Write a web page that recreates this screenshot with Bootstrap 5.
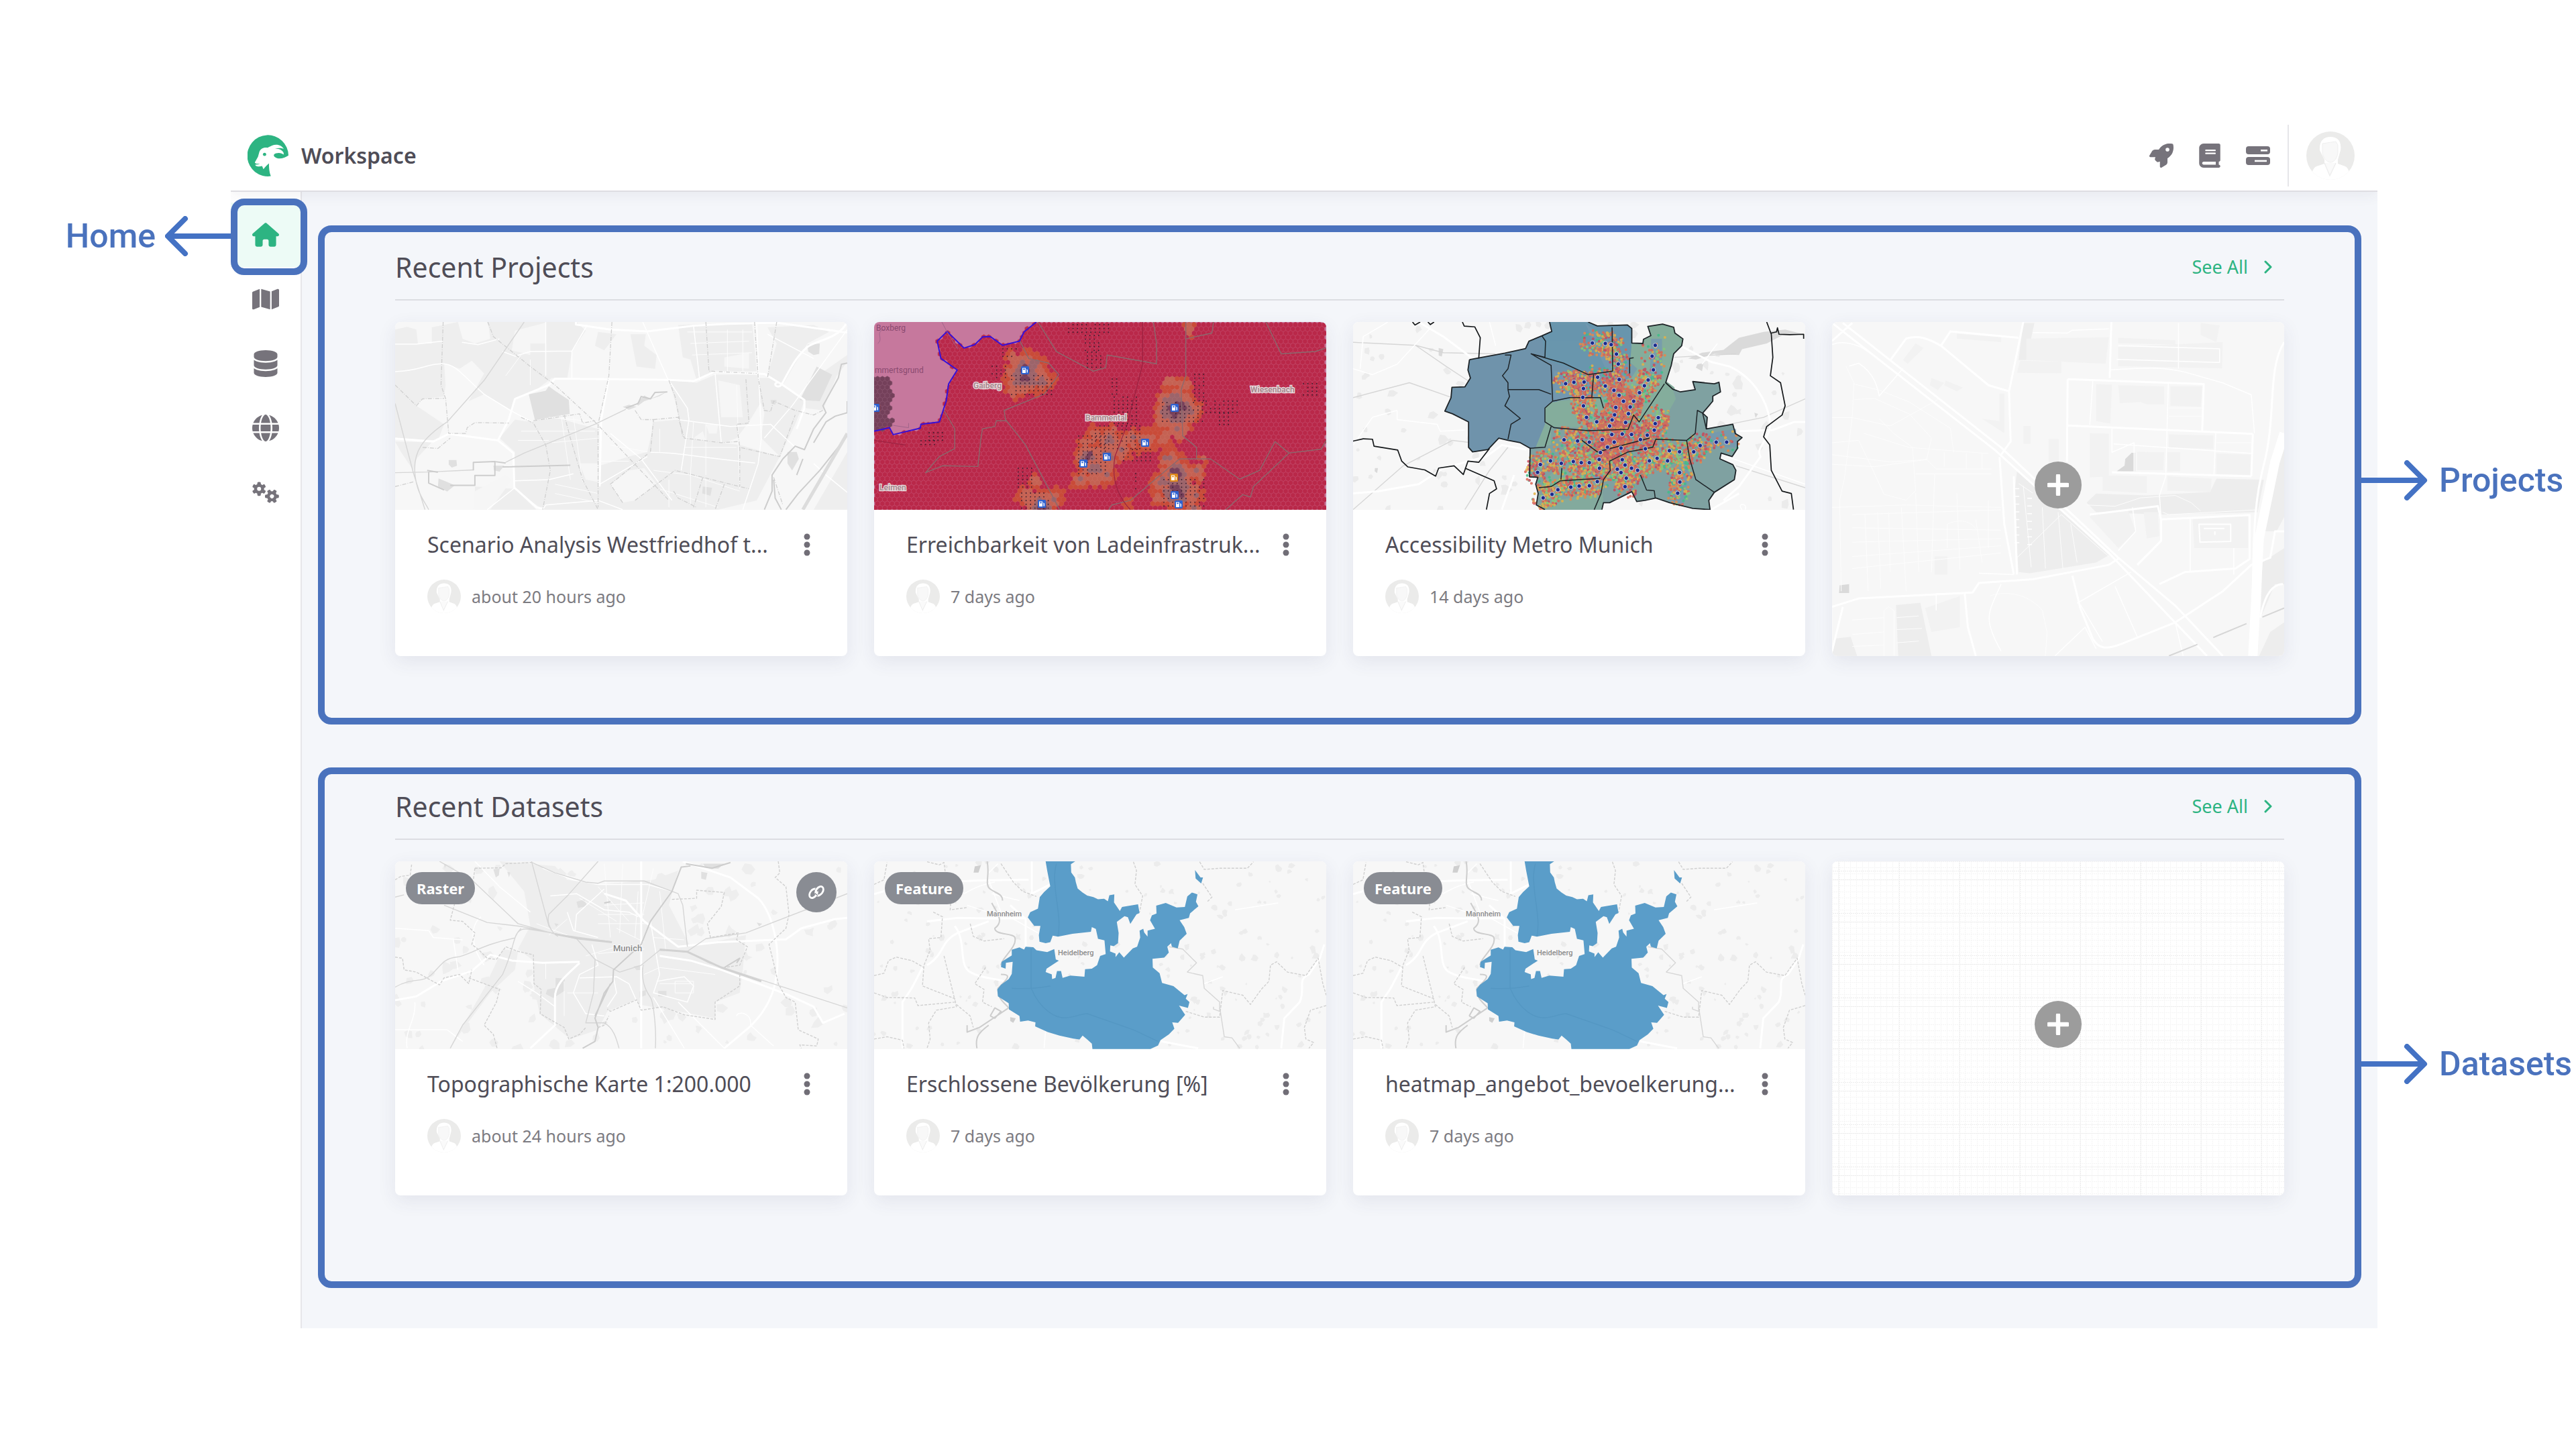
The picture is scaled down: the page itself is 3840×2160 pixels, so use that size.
<!DOCTYPE html>
<html lang="en">
<head>
<meta charset="utf-8">
<meta name="viewport" content="width=device-width, initial-scale=1">
<title>Workspace</title>
<link href="https://cdn.jsdelivr.net/npm/bootstrap@5.3.0/dist/css/bootstrap.min.css" rel="stylesheet">
<style>
  :root { --ink:#4f4d57; --icon:#76737b; --muted-ink:#7c7b81; --green:#2db482; --note:#4a72bd; --rule:#dcdde2; --canvas:#f4f6fa; }
  body { background:#fff; color:var(--ink); font-family:"Noto Sans","Open Sans",sans-serif; overflow-x:hidden; }
  a { text-decoration:none; }
  svg { display:block; }
  .stage { padding:180px 296px 180px 344px; }
  .topbar { height:106px; border-bottom:2px solid #dedde2; box-shadow:0 4px 20px rgba(58,53,85,.07); clip-path:inset(0 0 -40px 0); padding:0 34px 0 25px; position:relative; z-index:2; background:#fff; }
  .brand-name { font-size:32px; line-height:48px; font-weight:600; color:var(--ink); margin-left:19px; }
  .tool { border:0; background:none; padding:0; color:var(--icon); }
  .tools { gap:38px; }
  .divider { width:2px; height:92px; background:#e6e6e9; margin:0 26px; }
  .sidebar { width:106px; border-right:2px solid #e6e6ea; padding-top:16px; flex:none; background:#fff; }
  .side-link { height:96px; color:var(--icon); position:relative; }
  .side-link.current { background:#edfbf6; color:var(--green); }
  .ring { position:absolute; border:10px solid var(--note); border-radius:20px; z-index:3; }
  .ring-home { top:-6px; left:0; width:114px; height:114px; }
  .note { position:absolute; color:var(--note); font-family:Roboto,sans-serif; font-weight:500; font-size:50px; line-height:60px; white-space:nowrap; z-index:3; }
  .note-home { right:100%; top:20px; gap:14px; }
  .note-side { left:100%; top:370px; gap:16px; margin-left:10px; transform:translateY(-50%); }
  .content { background:var(--canvas); padding:50px 24px 60px; min-width:0; }
  .panel { border:10px solid var(--note); border-radius:20px; padding:22px 105px 92px; position:relative; }
  .panel + .panel { margin-top:64px; padding-top:18px; padding-bottom:128px; }
  .panel + .panel .note-side { top:432px; }
  .panel-head { border-bottom:2px solid var(--rule); padding-bottom:18px; margin-bottom:32px; }
  .panel-head h2 { font-size:41px; line-height:60px; margin:0; font-weight:400; color:var(--ink); }
  .see-all { color:var(--green); font-size:27px; line-height:40px; gap:24px; padding-right:18px; }
  .see-all:hover { color:var(--green); }
  .tiles { display:grid; grid-template-columns:repeat(4,minmax(0,1fr)); gap:40px; }
  .tile { border:0; border-radius:8px; overflow:hidden; box-shadow:0 8px 28px rgba(58,53,100,.09); background:#fff; }
  .tile-map { height:280px; position:relative; }
  .tile-map svg.map { width:100%; height:100%; }
  .tile-body { padding:28px 48px 64px; }
  .tile-title { font-size:32px; line-height:48px; font-weight:400; margin:0; white-space:nowrap; color:var(--ink); }
  .more { width:24px; height:48px; border:0; background:none; padding:0; color:#716e77; flex:none; }
  .tile-meta { margin-top:28px; gap:16px; font-size:25px; line-height:50px; color:var(--muted-ink); }
  .pill { position:absolute; left:16px; top:16px; height:48px; border-radius:24px; background:#898c93; color:#fff; font-weight:700; font-size:22px; line-height:48px; padding:0 16px; }
  .link-dot { position:absolute; right:16px; top:16px; width:60px; height:60px; border-radius:50%; background:#898c93; }
  .tile-new { position:relative; padding:0; min-height:498px; }
  .tile-new svg.map { position:absolute; inset:0; width:100%; height:100%; }
  .plus { width:70px; height:70px; border-radius:50%; background:#9c9c9c; position:relative; margin-bottom:12px; }
  .traced path { vector-effect:non-scaling-stroke; fill:none; stroke-linejoin:round; }
  .traced .area { stroke:none; }
  .road { stroke:#fff; stroke-width:1.5px; } .road-lg { stroke:#fff; stroke-width:3px; } .road-sm { stroke:#fdfdfd; stroke-width:1px; }
  .rail { stroke:#d6d6d6; stroke-width:1.4px; } .water { stroke:#cdcdcd; stroke-width:2px; } .bound { stroke:#d0d0d0; stroke-width:1.3px; stroke-dasharray:6 2 1 2; }
  .bound-b { stroke:#d0d0d0; stroke-width:1.4px; stroke-dasharray:4 2; }
</style>
<script src="https://cdn.jsdelivr.net/npm/bootstrap@5.3.0/dist/js/bootstrap.bundle.min.js" defer></script>
</head>
<body>

<!-- shared symbols -->
<svg width="0" height="0" class="position-absolute" aria-hidden="true">
  <defs>
    <symbol id="person" viewBox="0 0 72 72">
      <clipPath id="disc"><circle cx="36" cy="36" r="36"/></clipPath>
      <g clip-path="url(#disc)">
        <rect width="72" height="72" fill="#ebebea"/>
        <path d="M20 28C19 14 26 8 36 8s17 6 15 20l-4 14v6l11 4c6 3 7 12 7 21H7c0-9 2-18 8-21l12-4v-6z" fill="#fff"/>
        <path d="M24 18l20-3 3 5v10c0 8-5 16-11 16s-12-8-12-16z" fill="#f8f8f8" stroke="#efefef"/>
        <path d="M27 47l8 19 9-19" fill="#fafafa" stroke="#eeeeee" stroke-width="1.5"/>
      </g>
    </symbol>
    <symbol id="dots" viewBox="0 0 24 48"><circle cx="12" cy="12" r="4.5"/><circle cx="12" cy="24" r="4.5"/><circle cx="12" cy="36" r="4.5"/></symbol>
    <symbol id="chev" viewBox="0 0 12 20"><path d="M2 2l8 8-8 8" fill="none" stroke="currentColor" stroke-width="3" stroke-linecap="round" stroke-linejoin="round"/></symbol>
    <symbol id="arrow" viewBox="0 0 100 60"><path d="M0 30H92M68 4l26 26-26 26" fill="none" stroke="#4472c4" stroke-width="8" stroke-linecap="round" stroke-linejoin="round"/></symbol>
    <symbol id="cross" viewBox="0 0 30 30"><path d="M15 2v26M2 15h26" fill="none" stroke="#fff" stroke-width="6" stroke-linecap="round"/></symbol>
    <symbol id="rhein" viewBox="0 0 674 280">
      <rect width="674" height="280" fill="#f7f7f7"/>
      <g id="rheinPatches" fill="#ececec"></g>
      <g class="traced" transform="scale(.4591 .344) translate(-28 -70)">
        <path class="road-lg" d="M28 212L110 180 230 160 390 152 530 150M200 330L300 315 420 318 520 316M120 880L120 680 150 620 185 530 M200 520C260 470 240 420 300 380 L400 330M290 350C330 420 300 520 340 550S420 575 450 590M540 70V210L600 170M520 440V320L470 260M960 850L1040 870 1080 880M1350 880L1360 750 1410 680C1430 620 1400 580 1440 560L1475 490 1490 430"/>
        <path class="road" d="M400 150L440 290 560 380M400 120L430 80M320 210C360 180 380 170 420 160M420 300L330 260M410 210L500 240M1100 600L1160 570M1200 280L1340 250M580 880L585 800M870 480L860 540"/>
        <path class="bound-b" d="M28 170L60 150 70 75M200 72L240 85 255 75 262 150 280 200 275 280 330 270M220 290L250 310 245 400 205 405 210 455 190 520 185 610 290 665 295 700 230 715 205 770 210 840 200 880M28 640L70 660 160 662 170 695 290 680M28 565L60 555 75 500 100 485 150 500 190 530M255 480L290 670M440 80L480 160 510 200 555 222M340 340L350 395 385 415 450 405M390 530L355 600 385 625 380 680 410 700M870 72L880 110 875 170 900 220 890 290M1085 72L1100 105 1150 100 1240 100 1260 72M1095 165L1125 225 1110 245M1040 720L1100 745 1150 745 1160 630 1225 650 1250 690 1285 625 1310 590 1315 520 1335 505 1370 550 1430 565 1470 490 1485 600 1496 650M1496 695L1445 715 1425 790 1430 840 1455 855 1440 880M28 840L70 830 120 845 125 880M295 690L340 740 350 790"/>
        <path class="water" d="M395 70C405 130 385 170 405 190S445 210 445 240M410 250C430 300 450 330 420 360C420 390 480 380 485 400C495 440 440 490 440 520M440 560C470 560 470 570 430 620C430 670 450 680 465 705L370 790 330 810 330 780M405 740L420 705 440 720 420 750 405 740M362 880C355 830 370 810 400 780"/>
        <path class="rail" d="M985 440L1030 450 1075 510 1045 550 1095 565 1100 620 1150 680 1150 720 1130 710 1130 700M1150 700L1165 830 1190 835 1215 880"/>
        <path class="area" style="fill:#cfcfcf" d="M355 92l20-5-8 32-16 0zM470 745l18 5-8 20-10-8z"/>
        <path class="area" style="fill:#5a9dc9" d="M585 70L681 70 667 82 668 118 680 140 683 160 689 188 705 205 720 218 740 225 755 234 775 232 787 243 792 217 808 213 807 248 826 285 833 268 885 256 890 294 880 300 860 341 852 312 841 308 816 332 822 380 820 425 806 438 795 434 794 460 812 470 812 485 824 464 839 487 868 447 882 440 892 400 890 370 902 362 905 378 916 396 916 370 940 362 924 325 930 304 945 296 944 262 975 250 1010 270 1037 268 1045 222 1060 205 1078 213 1073 245 1081 265 1054 295 1050 315 1020 325 1035 355 1043 384 1020 414 1014 447 995 440 992 425 980 440 985 465 970 487 932 492 933 530 955 555 963 597 1000 611 1036 650 1046 645 1040 665 1052 680 1047 705 1018 695 1038 735 1015 770 996 768 1003 795 985 820 958 845 950 868 925 883 737 883 735 860 720 842 705 825 695 842 675 838 630 825 592 810 551 785 552 768 528 760 502 765 500 740 466 712 465 685 430 655 428 625 440 605 465 580 475 558 478 505 456 510 455 535 440 528 442 505 475 478 475 453 500 443 515 452 520 440 545 442 555 455 590 463 613 450 618 495 628 500 588 535 585 550 605 560 606 580 617 575 622 545 635 545 640 575 665 565 711 570 713 537 735 535 752 520 762 480 780 472 776 412 755 406 748 363 735 355 732 375 672 384 625 396 608 392 600 420 585 425 565 418 563 390 568 350 548 350 527 313 535 290 560 275 566 225 580 203 600 178 590 110z M1070 108l18 32h8l-6 26-18-22z"/>
        <path d="M620 80C600 170 640 300 625 395M538 450V620C570 720 620 750 650 748S700 730 720 730L870 800 950 850M475 620C520 625 560 620 600 610" stroke="#5497c3" stroke-width="1.5"/>
      </g>
      <g font-family="Roboto,sans-serif" font-size="11" font-weight="500" fill="#8b8b8b" stroke="#fafafa" stroke-width="2" paint-order="stroke"><text x="168" y="82">Mannheim</text><text x="274" y="140">Heidelberg</text></g>
    </symbol>
  </defs>
</svg>

<div class="stage">
  <header class="topbar d-flex align-items-center justify-content-between">
    <a href="#" class="d-flex align-items-center">
      <svg width="61" height="62" viewBox="708 78 149 155" preserveAspectRatio="none" aria-hidden="true"><path fill="#2db482" d="M793 232A75 77 0 1 1 857 155C845 164 828 169 815 165C801 160 800 150 812 147C822 144 834 146 839 152C843 140 828 129 808 129C825 126 836 128 840 131C834 118 815 110 797 118C790 121 785 124 781 126C765 124 755 130 751 142L746 160L735 180C733 184 742 187 752 185C748 190 738 188 736 190C737 197 750 197 761 194L766 206C773 196 780 190 786 184C786 200 787 218 793 232z"/><circle cx="770" cy="151" r="6" fill="#2db482"/></svg>
      <span class="brand-name">Workspace</span>
    </a>
    <div class="d-flex align-items-center">
      <div class="tools d-flex align-items-center">
        <button class="tool" aria-label="What's new"><svg width="36" height="36" viewBox="0 0 512 512" fill="currentColor"><path d="M156.6 384.9L125.7 354c-8.5-8.5-11.5-20.8-7.7-32.2c3-8.9 7-20.5 11.8-33.8L24 288c-8.6 0-16.6-4.6-20.9-12.1s-4.2-16.7 .2-24.1l52.5-88.5c13-21.9 36.5-35.3 61.9-35.3l82.3 0c2.4-4 4.8-7.7 7.2-11.3C289.1-4.1 411.1-8.1 483.9 5.3c11.6 2.1 20.6 11.2 22.8 22.8c13.4 72.9 9.3 194.8-111.4 276.7c-3.5 2.4-7.3 4.8-11.3 7.2v82.3c0 25.4-13.4 49-35.3 61.9l-88.5 52.5c-7.4 4.4-16.6 4.5-24.1 .2s-12.1-12.2-12.1-20.9V380.8c-14.1 4.9-26.4 8.9-35.7 11.9c-11.2 3.6-23.4 .5-31.8-7.8zM384 168a40 40 0 1 0 0-80 40 40 0 1 0 0 80z"/></svg></button>
        <button class="tool" aria-label="Documentation"><svg width="32" height="36" viewBox="0 0 448 512" fill="currentColor"><path d="M96 0C43 0 0 43 0 96V416c0 53 43 96 96 96H384h32c17.7 0 32-14.3 32-32s-14.3-32-32-32V384c17.7 0 32-14.3 32-32V32c0-17.7-14.3-32-32-32H384 96zm0 384H352v64H96c-17.7 0-32-14.3-32-32s14.3-32 32-32zm32-240c0-8.8 7.2-16 16-16H336c8.8 0 16 7.2 16 16s-7.2 16-16 16H144c-8.8 0-16-7.2-16-16zm16 48H336c8.8 0 16 7.2 16 16s-7.2 16-16 16H144c-8.8 0-16-7.2-16-16s7.2-16 16-16z"/></svg></button>
        <button class="tool" aria-label="Jobs"><svg width="36" height="28" viewBox="0 0 36 28"><g fill="currentColor"><rect width="36" height="12" rx="4"/><rect y="16" width="36" height="12" rx="4"/></g><g fill="#fff"><rect x="22" y="5" width="10" height="2.6"/><rect x="13" y="20.6" width="18" height="2.6"/></g></svg></button>
      </div>
      <div class="divider"></div>
      <button class="tool" aria-label="Account"><svg width="72" height="72"><use href="#person"/></svg></button>
    </div>
  </header>

  <div class="d-flex">
    <nav class="sidebar d-flex flex-column" aria-label="Main">
      <a href="#" class="side-link current d-flex align-items-center justify-content-center" aria-label="Home">
        <svg width="40" height="36" viewBox="0 0 576 512" fill="currentColor"><path d="M575.8 255.5c0 18-15 32.1-32 32.1h-32l.7 160.2c0 2.7-.2 5.4-.5 8.1V472c0 22.1-17.9 40-40 40H456c-1.1 0-2.2 0-3.3-.1c-1.4 .1-2.8 .1-4.2 .1H416 392c-22.1 0-40-17.9-40-40V448 384c0-17.7-14.3-32-32-32H256c-17.7 0-32 14.3-32 32v64 24c0 22.1-17.9 40-40 40H160 128.1c-1.5 0-3-.1-4.5-.2c-1.2 .1-2.4 .2-3.6 .2H104c-22.1 0-40-17.9-40-40V360c0-.9 0-1.9 .1-2.8V287.6H32c-18 0-32-14-32-32.1c0-9 3-17 10-24L266.4 8c7-7 15-8 22-8s15 2 21 7L564.8 231.5c8 7 12 15 11 24z"/></svg>
        <span class="ring ring-home"></span>
        <span class="note note-home d-flex align-items-center">Home<svg width="98" height="60" viewBox="0 0 98 60" aria-hidden="true"><path d="M98 30H6M30 4L4 30l26 26" fill="none" stroke="#4472c4" stroke-width="8" stroke-linecap="round" stroke-linejoin="round"/></svg></span>
      </a>
      <a href="#" class="side-link d-flex align-items-center justify-content-center" aria-label="Projects"><svg width="40" height="36" viewBox="0 0 576 512" fill="currentColor"><path d="M384 476.1L192 421.2V35.9L384 90.8V476.1zm32-1.2V88.4L543.1 37.5c15.8-6.3 32.9 5.3 32.9 22.3V394.6c0 9.8-6 18.6-15.1 22.3L416 474.8zM15.1 95.1L160 37.2V423.6L32.9 474.5C17.1 480.8 0 469.2 0 452.2V117.4c0-9.8 6-18.6 15.1-22.3z"/></svg></a>
      <a href="#" class="side-link d-flex align-items-center justify-content-center" aria-label="Datasets"><svg width="36" height="40" viewBox="0 0 448 512" fill="currentColor"><path d="M448 80v48c0 44.2-100.3 80-224 80S0 172.2 0 128V80C0 35.8 100.3 0 224 0S448 35.8 448 80zM393.2 214.7c20.8-7.4 39.9-16.9 54.8-28.6V288c0 44.2-100.3 80-224 80S0 332.2 0 288V186.1c14.9 11.8 34 21.2 54.8 28.6C99.7 230.7 159.5 240 224 240s124.3-9.3 169.2-25.3zM0 346.1c14.9 11.8 34 21.2 54.8 28.6C99.7 390.7 159.5 400 224 400s124.3-9.3 169.2-25.3c20.8-7.4 39.9-16.9 54.8-28.6V432c0 44.2-100.3 80-224 80S0 476.2 0 432V346.1z"/></svg></a>
      <a href="#" class="side-link d-flex align-items-center justify-content-center" aria-label="Catalog"><svg width="40" height="40" viewBox="0 0 512 512" fill="currentColor"><path d="M352 256c0 22.2-1.2 43.6-3.3 64H163.3c-2.2-20.4-3.3-41.8-3.3-64s1.2-43.6 3.3-64H348.7c2.2 20.4 3.3 41.8 3.3 64zm28.8-64H503.9c5.3 20.5 8.1 41.9 8.1 64s-2.8 43.5-8.1 64H380.8c2.1-20.6 3.2-42 3.2-64s-1.1-43.4-3.2-64zm112.6-32H376.7c-10-63.9-29.8-117.4-55.3-151.6c78.3 20.7 142 77.5 171.9 151.6zm-149.1 0H167.7c6.1-36.4 15.5-68.6 27-94.7c10.5-23.6 22.2-40.7 33.5-51.5C239.4 3.2 248.7 0 256 0s16.6 3.2 27.8 13.8c11.3 10.8 23 27.9 33.5 51.5c11.6 26 20.9 58.2 27 94.7zm-209 0H18.6C48.6 85.9 112.2 29.1 190.6 8.4C165.1 42.6 145.3 96.1 135.3 160zM8.1 192H131.2c-2.1 20.6-3.2 42-3.2 64s1.1 43.4 3.2 64H8.1C2.8 299.5 0 278.1 0 256s2.8-43.5 8.1-64zM194.7 446.6c-11.6-26-20.9-58.2-27-94.6H344.3c-6.1 36.4-15.5 68.6-27 94.6c-10.5 23.6-22.2 40.7-33.5 51.5C272.6 508.8 263.3 512 256 512s-16.6-3.2-27.8-13.8c-11.3-10.8-23-27.9-33.5-51.5zM135.3 352c10 63.9 29.8 117.4 55.3 151.6C112.2 482.9 48.6 426.1 18.6 352H135.3zm358.1 0c-30 74.1-93.6 130.9-171.9 151.6c25.5-34.2 45.2-87.7 55.3-151.6H493.4z"/></svg></a>
      <a href="#" class="side-link d-flex align-items-center justify-content-center" aria-label="Settings"><svg width="40" height="32" viewBox="0 0 40 32"><defs><g id="cog"><circle r="5.2" fill="none" stroke="currentColor" stroke-width="4.6"/><g fill="currentColor"><rect x="-2.6" y="-10.4" width="5.2" height="20.8" rx="1.6"/><rect x="-2.6" y="-10.4" width="5.2" height="20.8" rx="1.6" transform="rotate(60)"/><rect x="-2.6" y="-10.4" width="5.2" height="20.8" rx="1.6" transform="rotate(120)"/></g><circle r="3" fill="#fff"/></g></defs><use href="#cog" transform="translate(10.2 10.8)"/><use href="#cog" transform="translate(29.4 21.8) rotate(30)"/></svg></a>
    </nav>

    <main class="content flex-grow-1">
      <section class="panel">
        <div class="panel-head d-flex align-items-center justify-content-between">
          <h2>Recent Projects</h2>
          <a href="#" class="see-all d-flex align-items-center">See All<svg width="12" height="20"><use href="#chev"/></svg></a>
        </div>
        <div class="tiles">
          <article class="tile card">
            <div class="tile-map"><svg class="map" viewBox="0 0 674 280" preserveAspectRatio="xMidYMid slice" role="img" aria-label="Map preview">
              <rect width="674" height="280" fill="#f7f7f7"/>
              <g class="traced" transform="scale(.4591 .344) translate(-41 -57)">
                <path class="area" style="fill:#eeeeee" d="M41 90L80 78 110 90 115 150 160 150 160 80 245 57 260 130 300 150 350 130 345 80 340 57 540 57 630 57 660 95 615 185 600 300 550 300 500 350 430 390 420 440 330 370 280 400 330 280 290 225 250 260 200 235 205 330 200 380 130 390 110 420 200 500 180 570 41 560zM41 575L160 578 110 650 100 700 60 620zM380 560L430 480 480 490 560 470 640 500 700 520 705 870 520 870 425 775 430 620zM700 100L760 110 720 180 690 160zM805 110L855 110 850 160 890 200 885 260 825 250zM960 70L1200 57 1215 270 1085 275 1020 310 1000 220 975 210zM930 310L1020 320 1080 285 1215 285 1240 380 1190 490 1150 560 1110 580 975 555 950 400zM880 490L960 480 985 560 1100 580 1160 590 1290 640 1215 830 1090 870 700 870 705 680 800 640 860 620 870 560zM1250 80L1400 70 1450 100 1380 150 1330 260 1300 330 1250 290 1280 150zM1380 320L1509 200 1509 230 1475 290 1430 440 1370 430zM1270 300L1370 400 1340 500 1290 640 1230 560 1240 450 1200 300zM1509 620L1400 870 1509 870zM300 770L430 780 500 870 300 870z"/>
                <path class="area" style="fill:#f6f6f6" d="M430 95L530 60 530 150 480 150 480 200 420 180zM300 790L400 720 420 740 350 870 295 870zM640 670L700 670 700 750 660 740zM740 760L800 700 850 690 890 760 820 830 780 840zM1010 560L1050 570 1040 530zM1090 310L1160 330 1170 470 1100 470zM1050 500L1090 500 1085 540 1060 540zM1110 210L1190 190 1190 260 1110 250z"/>
                <path class="area" style="fill:#e0e0e0" d="M475 370L530 355 540 335 560 355 605 395 608 455 495 482zM1380 155L1420 150 1418 195 1400 200 1382 185zM1410 250L1460 285 1420 400 1355 395zM1040 770L1070 775 1065 810 1038 800zM182 735L210 750 235 765 210 792 180 770zM215 655L240 655 242 680 225 688 215 675zM780 425L800 415 825 425 800 437zM825 410L850 375 870 390 925 358 900 378 850 400 830 420zM1315 620L1345 620 1352 650 1330 700 1315 670zM1260 395L1280 395 1275 415 1262 410zM360 680L395 680 380 705 362 700z"/>
                <path class="road-lg" d="M628 57V68L740 90 860 98 1010 73 1120 65 1280 60 1509 103M41 562L165 575 215 542 375 570 425 625 428 775 500 860 520 866M375 570L410 480 430 390 540 330 560 303 740 305 930 308 1010 313 1080 272 1240 282 1300 330 1370 395 1370 430 1345 520M705 770L710 480 735 300M1505 65C1480 130 1400 140 1380 165C1340 210 1320 270 1295 330C1280 350 1265 320 1285 318"/>
                <path class="road" d="M41 272C120 270 140 240 190 238S260 290 330 370L415 440 485 490M41 153H110L195 140M258 145L310 155 380 130M390 185L430 205 480 185 615 183 665 70M530 57L530 290M615 185V300M845 57L925 300 990 430 995 480 970 700M1010 75L1030 310M1080 280L1100 580M1215 57L1230 560 1220 670 1170 870M870 622C960 622 1000 640 1210 668M840 650L940 830M740 540L840 650M430 745L540 740 620 715M1400 670L1440 720 1509 795M1240 560L1330 420 1509 90M430 775L340 870M705 760L860 640M520 870L530 850 700 830 780 870M960 480L1130 510 1260 500 1340 600M1250 110L1400 215"/>
                <path class="road-sm" d="M540 470L700 490M550 580L700 560M740 590L860 620M980 600L1150 600M1010 490L1000 720M1050 500V720M900 520V620M1150 330L1160 780M620 470L650 750M580 460L610 740M450 530L690 530M440 570L540 570M700 660H800M990 100H1200M1000 150L1190 140M1005 200L1200 190M880 700L1000 720 1160 790M900 780L1090 860M930 740V860M1000 720V850M1050 730V860M450 200L400 290M480 220V330M560 760L700 800M560 800L700 840M1120 90V270M1170 90V270"/>
                <path class="bound" d="M197 57L190 330 205 390 215 540 270 540 275 515 300 493 410 495M41 330L110 420 130 390 200 388M342 57L360 120 480 250 560 330 690 490 810 660 930 830M450 470L490 495 530 590 545 700 520 870M590 460L610 560 650 740 700 870M490 485L640 455 650 495 690 485M745 57L735 290 700 500 700 860M820 440L840 480 880 480 870 620M880 480L960 470 980 560 1100 580 1155 575M930 310L950 380 975 555M1050 57L1060 270 1215 280M1208 57L1220 300 1240 440 1260 445 1270 400 1340 440 1400 460 1430 440M1180 305L1190 495 1150 500 1160 600 1290 640 1340 460M1160 600V770M130 600L180 605 220 560M41 770L100 750M780 840L740 760 860 630M820 830L950 700 1160 770 1190 780M945 790L960 820 1020 860M1040 730L1010 860M1110 760L1080 870M1280 57L1250 300M1270 730L1300 850"/>
                <path class="rail" d="M460 57L330 310 210 490C130 560 100 620 105 710S140 840 150 870M41 410L100 710 138 870M400 665L460 625 690 500 790 435M41 710L150 707 295 698"/>
                <path class="water" d="M295 700V665L365 662V722H300V765L220 765M150 707V755L200 785M145 700L180 708M390 685L610 678M365 662L400 668M1509 235L1490 240 1480 300 1430 420 1440 450 1400 520 1370 610 1340 595 1300 650 1265 720 1265 790 1240 870M1509 400V450L1470 465 1440 490 1400 580M1509 550L1420 700 1350 800 1310 870M1345 720L1365 650M1270 740L1275 820 1295 870M790 430L830 410 840 380 870 390 885 362 925 360"/>
                <path d="M1509 540L1365 870" stroke="#dcdcdc" stroke-width="5"/>
              </g></svg></div>
            <div class="tile-body">
              <div class="d-flex justify-content-between"><h3 class="tile-title">Scenario Analysis Westfriedhof t...</h3><button class="more" aria-label="More"><svg width="24" height="48" fill="currentColor"><use href="#dots"/></svg></button></div>
              <div class="tile-meta d-flex align-items-center"><svg width="50" height="50"><use href="#person"/></svg><span>about 20 hours ago</span></div>
            </div>
          </article>

          <article class="tile card">
            <div class="tile-map"><svg class="map" viewBox="0 0 674 280" preserveAspectRatio="xMidYMid slice" role="img" aria-label="Map preview">
              <rect width="674" height="280" fill="#c6789d"/>
              <g id="hexes" stroke-width=".7"></g>
              <g class="traced" transform="scale(.4591 .344) translate(-28 -57)">
                <path d="M560 57L620 185 740 270 780 255 785 200 945 238 945 150 935 57M1040 57V290L1025 350 1030 550 1075 600V650H1020L860 830 800 850 790 870M1040 130L1125 105 1130 57M1300 57L1350 195 1460 185 1496 170M1075 650H1120L1215 738 1280 700 1330 575 1375 625 1480 608 1496 570M1375 625L1260 770 1250 815 1225 805 1170 870M500 135L530 215 595 235 628 285 580 370 450 440 455 480 520 590 630 870M255 440L290 520 290 605 240 640 195 710 250 680 365 683 375 560 380 520 420 510 425 485 458 485" stroke="#8a6a6e" stroke-width="1.4"/>
                <path d="M900 57V240L850 500 810 640C800 720 810 800 860 870M28 570L130 590" stroke="#9b2140" stroke-width="1.2"/>
                <path d="M555 57L515 100 500 140 445 158 405 120 380 122 355 155 320 170 265 98 233 140 245 215 298 265 270 325 262 400 240 490 180 500 178 517 90 545 78 515 28 530" stroke="#3510d8" stroke-width="2"/>
                <path d="M248 57L265 100 300 175M60 90C30 100 60 130 40 150M90 505L140 515V495" stroke="#a0648a" stroke-width="1"/>
              </g>
              <g id="builds" fill="#3c1f30"></g>
              <g id="pumps"></g>
              <g font-family="Roboto,sans-serif" font-size="12" font-weight="700" fill="#a98a90" stroke="#eee0e2" stroke-width="2.4" paint-order="stroke"><text x="148" y="99">Gaiberg</text><text x="561" y="105">Wiesenbach</text><text x="315" y="147">Bammental</text><text x="8" y="251">Leimen</text></g>
              <g font-family="Roboto,sans-serif" font-size="12" fill="#8a4a70"><text x="1" y="76">mmertsgrund</text><text x="3" y="13">Boxberg</text></g>
            </svg></div>
            <div class="tile-body">
              <div class="d-flex justify-content-between"><h3 class="tile-title">Erreichbarkeit von Ladeinfrastruk...</h3><button class="more" aria-label="More"><svg width="24" height="48" fill="currentColor"><use href="#dots"/></svg></button></div>
              <div class="tile-meta d-flex align-items-center"><svg width="50" height="50"><use href="#person"/></svg><span>7 days ago</span></div>
            </div>
          </article>

          <article class="tile card">
            <div class="tile-map"><svg class="map" viewBox="0 0 674 280" preserveAspectRatio="xMidYMid slice" role="img" aria-label="Map preview">
              <rect width="674" height="280" fill="#f7f7f7"/>
              <g id="metroPatches" fill="#ebebeb"></g>
              <g class="traced" transform="scale(.4591 .344) translate(-37 -57)">
                <path class="area" style="fill:#dadada" d="M1125 215L1170 190 1240 178 1290 125 1370 100 1440 90 1500 110 1430 115 1380 150 1300 175 1290 200 1210 195 1150 220zM1155 240L1175 235 1170 270 1150 255zM315 170l15 5-5 32-10-5zM1340 450l12 5-8 18zM108 690l10 0-3 22-8-8z"/>
                <path class="rail" d="M37 145L240 158 330 190 500 195M240 158L340 250 420 320M37 385L220 320 370 390M37 870L200 680 360 570 420 580M400 870L480 700 540 600M1280 680L1505 775M1260 500L1370 470 1505 390M1080 210L1280 195"/>
                <path class="road-lg" d="M250 57L330 120 430 220M37 800L120 790 250 760 330 690 470 640 520 590 600 610M1100 160L1200 230 1260 250C1340 300 1380 400 1390 480S1340 600 1360 640L1290 770 1240 830M1200 870L1290 800M1290 530L1400 525 1470 490 1505 490M520 870L560 720"/>
                <path class="road" d="M37 260L100 285 180 240 290 80M180 440V480L310 500 320 530 400 525M37 590L100 470 180 440M480 57L500 160M1220 150L1170 240M1300 870C1280 840 1320 840 1310 870M1250 640L1505 760M60 260L70 120 150 57"/>
                <path class="area" style="fill:#84ad9c" d="M640 605L700 380 900 250 1000 260 1080 340 1100 460 1000 560 800 640z"/>
                <path class="area" style="fill:#6f93ab" d="M415 220L530 192 597 172 608 140 650 117 682 98 675 57 800 57 830 74 928 70 942 85 942 210 935 300 700 400 640 600 612 604 580 580 540 570 510 560 475 610 425 620 412 600 412 490 360 455 335 443 355 385 358 340 400 338 418 300 410 265z"/>
                <path class="area" style="fill:#6996ad" d="M650 117L682 98 675 57 800 57 830 74 928 70 942 85 942 210 935 280 800 285 660 220z"/>
                <path class="area" style="fill:#84ad9c" d="M942 148L978 150 980 132 1004 116 994 76 1042 66 1078 80 1082 105 1108 130 1104 160 1078 195 1070 245 1052 320 1075 348 1085 390 1060 450 1000 500 932 300zM682 405L840 385 860 520 780 530 680 510 665 600 630 600 660 500 660 430z"/>
                <path class="area" style="fill:#7fa1a1" d="M1075 348L1100 360 1148 350 1140 315 1210 325 1225 318 1230 360 1205 378 1205 400 1172 452 1187 470 1184 520 1270 500 1278 540 1300 558 1285 575 1285 605 1268 640 1232 625 1228 650 1270 675 1280 700 1275 740 1210 795 1192 830 1196 870 1140 865 1065 840 1020 820 985 830 958 835 942 792 870 840 850 840 845 870 660 870 632 850 638 800 630 760 637 730 610 728 612 604 680 590 680 510 960 520 1060 450 1085 390z"/>
                <path class="area" style="fill:#83aa9d" d="M640 840L790 810 845 760 850 840 845 870 660 870zM690 700L760 700 770 760 690 770 640 775zM880 300L900 300 910 520 830 520 840 400 880 380z"/>
                <path class="area" style="fill:#7498b0;opacity:.8" d="M790 60L960 260 940 300 870 300zM1190 540L1280 520 1285 600 1200 600zM690 270L900 280 880 380 690 400zM1005 130L1040 130 1040 300 1000 310zM800 600L870 600 860 740 820 740zM1070 690L1130 690 1110 850 1060 830z"/>
              </g>
              <g id="heat" fill="none" stroke-linecap="round" stroke-width="4" opacity=".85"></g>
              <g class="traced" transform="scale(.4591 .344) translate(-37 -57)">
                <path stroke="#1d2327" stroke-width="1.8" d="M415 220L530 192 597 172 608 140 650 117 682 98 675 57M800 57L830 74 928 70 942 85 942 148 978 150 980 132 1004 116 994 76 1042 66 1078 80 1082 105 1108 130 1104 160 1078 195 1070 245 1052 320 1075 348 1100 360 1148 350 1140 315 1210 325 1225 318 1230 360 1205 378 1205 400 1172 452 1187 470 1184 520 1270 500 1278 540 1300 558 1285 575 1285 605 1268 640 1232 625 1228 650 1270 675 1280 700 1275 740 1210 795 1192 830 1196 870 1140 865 1065 840 1020 820 985 830 958 835 942 792 870 840 850 840 845 870M660 870L632 850 638 800 630 760 637 730 610 728 612 604 580 580 540 570 510 560 475 610 425 620 412 600 412 490 360 455 335 443 355 385 358 340 400 338 418 300 410 265 415 220"/>
                <path stroke="#1d2327" stroke-width="1.5" d="M650 117L662 140 660 210 615 195 680 245 685 400 660 430 660 490 690 515 800 528 930 522 948 460 966 490 1048 325M615 195L720 235 800 285 880 270M530 200L550 200 540 260 522 290 540 320 540 350 600 350 640 350 680 370M540 350L545 380 530 420 580 475 550 500 540 565M685 400L740 385 840 385 850 430M818 285L812 385M880 270L878 80M935 280L935 215 948 212M680 510L660 600 612 604M1184 520L1172 452 1155 440 1148 540 1120 570 1020 565 1010 600 930 620 870 660 872 700 850 740 842 800 820 870M1120 570L1130 650 1150 740 1210 795M640 775L680 770 710 745 770 740 840 735M970 720L990 785 1015 788 1018 820M780 570L830 620 1000 560M715 690L712 740"/>
                <path stroke="#15181a" stroke-width="1.7" d="M230 57L238 70 255 57M280 57L288 68 300 57M392 57L398 75 432 78 450 125 445 215M37 573L70 563 100 565 105 595 182 612 195 660 215 685 270 698 305 725 315 690 365 680 395 718 410 660 445 665 480 605M400 690L495 745 503 780 480 800 470 870M1380 57L1395 110 1400 210 1392 290 1425 320 1440 420 1430 460 1380 510 1370 555 1390 590 1395 700 1430 790 1460 800 1467 870M1395 105L1412 100 1415 82 1420 110 1455 112 1500 110V130"/>
              </g>
              <g id="stations" fill="#1b2a8c" stroke="#cfd8e6" stroke-width="1"></g>
            </svg></div>
            <div class="tile-body">
              <div class="d-flex justify-content-between"><h3 class="tile-title">Accessibility Metro Munich</h3><button class="more" aria-label="More"><svg width="24" height="48" fill="currentColor"><use href="#dots"/></svg></button></div>
              <div class="tile-meta d-flex align-items-center"><svg width="50" height="50"><use href="#person"/></svg><span>14 days ago</span></div>
            </div>
          </article>

          <button class="tile tile-new d-flex align-items-center justify-content-center" aria-label="New project">
            <svg class="map" viewBox="0 0 674 498" preserveAspectRatio="xMidYMid slice" aria-hidden="true">
              <rect width="674" height="498" fill="#f7f7f7"/>
              <g class="traced" transform="scale(.472 .3571) translate(-66 -56)">
                <path class="area" style="fill:#ededed" d="M650 680L700 730 940 1030 900 1060 690 1105 655 1100 640 800zM870 810L900 772 1060 780 1260 765 1280 710 1430 715 1410 850 1110 860 900 850zM268 1238L345 1228 380 1450 275 1450zM75 1378L125 1370 145 1450 66 1450zM1494 540L1470 650 1430 930 1470 930 1494 870zM1425 1060L1494 1000V1150L1465 1150 1420 1290zM1494 1310L1450 1350 1415 1450H1494zM670 60L705 60 680 215 655 215z"/>
                <path class="area" style="fill:#f2f2f2" d="M970 160L1300 140 1298 250 970 240zM970 122L1150 132V150L970 145zM680 125L940 120 930 230 680 215zM660 218L790 222V270L650 268zM970 320L1115 325V400H1060L1040 390 975 395zM1135 325L1235 325 1230 410 1135 405zM900 315L950 318 945 480 900 470zM1130 525L1270 530V585L1130 580zM1030 598L1115 600 1112 675 1030 675zM1125 600L1165 600V680H1125zM1280 605L1390 610V695L1280 690zM920 695L1060 700V770L920 760zM1125 700L1265 710 1262 765 1125 760zM880 520L940 522V700L880 705zM1230 60L1290 70 1280 140 1230 110zM290 215L330 145 355 165 305 230zM380 290L420 310 400 340 375 320zM425 300L480 330 460 345 420 320zM670 490H693V565H670zM750 545H782V640H750zM540 460L610 520V355H595V470zM890 855L1000 840 1025 930 970 1000 880 870zM1205 880L1380 865V1000L1210 1000zM1050 850L1095 850 1100 950 1060 960zM390 1035L430 1035V1110L390 1110zM460 105L600 120V140L460 125zM360 1250L470 1200V1330L380 1350z"/>
                <path class="area" style="fill:#dadada" d="M965 679L990 655 992 628 1012 602H1023V679zM90 1155L120 1150V1187H88z"/>
                <path class="road-lg" d="M66 135L130 60M100 60L600 580 970 1040 1150 1240 1300 1450M66 60L580 590 940 1020 1250 1450M1494 140C1440 250 1470 450 1430 650S1400 1000 1390 1450" stroke-width="4"/>
                <path d="M1494 520L1465 640 1415 960 1395 1450" stroke="#fff" stroke-width="14"/>
                <path class="road-lg" d="M250 215L300 125C340 110 370 125 410 155L560 320 625 345 630 555 600 610M670 56L640 250 625 345M410 155L440 95 655 122M948 56L943 290M810 295L1240 315 1235 510M810 295L808 640M808 488L1395 523M950 683L1390 700M1395 523L1390 700M66 1245L150 1210 510 1185 530 1145 700 1130 940 1070 975 1040M595 620L610 900 640 1110M640 700L650 1110M485 1190L495 1330 520 1450M66 1430L100 1245M825 1115L850 1250 890 1380C910 1420 930 1425 980 1400L1150 1310 1300 1180 1390 1070 1450 1040 1465 930 1494 930M1490 1150C1440 1150 1425 1250 1418 1290M880 860L1095 825 1105 880 1385 862V1045L1340 1085 1180 1100 1100 1150M1030 1070L1105 970V880"/>
                <path class="road" d="M1128 310L1120 700 1100 780 1105 870M1278 520L1272 700M955 565L1395 605M950 500L950 600 1020 560V680M970 155L1290 168V225L965 212M1160 60V250M890 295L880 485M1197 870V1095M1335 1000V1110M1015 830L1025 930 970 1010M1010 1100L840 1230M960 1160L1030 1370M850 1235L920 1390M1150 1310L1175 1450M945 255C1050 250 1100 240 1180 265L1300 310 1390 360 1400 520M700 100L810 102 825 90 940 85M480 1190H395V1260M530 1105L640 1110M770 1450L865 1330 900 1420M600 1150C560 1270 540 1290 600 1430M120 240L150 228C200 270 210 330 215 365L290 250M66 150C100 130 150 150 180 180"/>
                <path class="road-sm" d="M110 240L135 310 130 450 105 710 90 800 95 1180M66 455H130L250 490 400 380M135 315L215 340 310 390 440 500 450 600M135 380L200 375 310 440 380 540 365 630 250 640 66 610M165 520L310 580 560 605M66 560L150 550 190 660 230 775 300 800 330 760 320 580 260 520 215 460M66 650L200 660 365 630 395 670 570 670M330 690H570M420 600V660M490 605V670M540 605V670M66 830L300 820 600 830M130 860L600 840M130 915L600 925M130 975L600 960M130 1035L600 990M130 1085L600 1020M170 860L180 1180M210 850L220 1170M245 850L250 1100M285 830L300 1180M330 770L340 1100M390 690L380 1100M460 770L470 1090M520 880L540 1060M560 800V1000M430 1000V900C460 880 500 880 520 920M66 1250V1450M130 1300L230 1290M130 1360L230 1350M130 1410L230 1405M230 1450V1260L245 1245 262 1262V1450M270 1290L340 1283M270 1340L350 1335M270 1395L340 1388M650 1040L790 860 940 1035M730 830L740 1085M670 740L695 1080M780 850L795 1085M820 900L840 1060M655 730L700 770M1110 850L1130 860 1410 840M870 820L960 825 1040 790 1150 780 1200 810 1230 845M1130 415H1235M1130 450H1235M1280 560H1395M565 1200C600 1180 680 1180 730 1260L745 1350 740 1450"/>
                <path d="M1130 1450L1220 1402M1270 1373L1375 1315M1425 1288L1494 1250" stroke="#d6d6d6" stroke-width="2"/>
                <path d="M1225 900H1325V972L1228 975zM1240 918H1305M1275 930V945" stroke="#fff" stroke-width="2"/>
                <path d="M650 750V1000M690 790V1000" stroke="#fff" stroke-width="7" stroke-dasharray="1.5 10"/>
              </g>
            </svg>
            <span class="plus d-flex align-items-center justify-content-center"><svg width="32" height="32"><use href="#cross"/></svg></span>
          </button>
        </div>
        <div class="note note-side d-flex align-items-center"><svg width="100" height="60" aria-hidden="true"><use href="#arrow"/></svg>Projects</div>
      </section>

      <section class="panel">
        <div class="panel-head d-flex align-items-center justify-content-between">
          <h2>Recent Datasets</h2>
          <a href="#" class="see-all d-flex align-items-center">See All<svg width="12" height="20"><use href="#chev"/></svg></a>
        </div>
        <div class="tiles">
          <article class="tile card">
            <div class="tile-map"><svg class="map" viewBox="0 0 674 280" preserveAspectRatio="xMidYMid slice" role="img" aria-label="Map preview">
              <rect width="674" height="280" fill="#f7f7f7"/>
              <g id="munichPatches" fill="#eeeeee"></g>
              <g class="traced" transform="scale(.4591 .344) translate(-41 -70)">
                <path class="area" style="fill:#eeeeee" d="M380 70L560 90 600 150 700 170 880 150 960 110 930 260 1000 440 1180 390 1170 540 1160 640 1080 680 1080 750 960 720 830 690 820 670 730 720 700 800 610 840 510 730 490 600 490 500 440 450 480 350 460 200zM390 450L440 460 430 540 350 640 260 800 220 880 330 620z"/>
                <path class="area" style="fill:#e0e0e0" d="M562 575L592 578V630L555 662 530 645 535 625 562 618zM630 245L655 235 665 265 635 272zM895 632H922V655H895zM835 635L855 628V650L835 660zM1040 80L1110 80 1090 102 1050 98zM815 525L850 518 845 540 825 542zM360 105L380 102 378 130 368 140zM405 115l10 3-4 22zM1035 115L1055 120 1050 150 1035 145zM1215 335l18 5-10 12zM558 338l14 4-8 12zM200 80l8 4-6 18z"/>
                <path class="road-lg" d="M41 672L110 655 190 590 290 545 350 475 420 500 520 510 640 505M720 210L790 240 850 330 960 440 1090 420 1310 408 1360 360 1470 320 1509 315M975 70L1130 140 1220 230C1270 300 1290 450 1280 560S1230 740 1190 790L1110 880M840 70V880M640 510C600 560 560 600 560 660V780L480 880M900 480L1000 500 1100 540 1320 650 1400 700 1430 770 1500 730"/>
                <path class="road" d="M300 70L380 180 480 290M41 360L150 370 165 400 260 410M520 100L620 150 700 170 860 170 940 200M545 220L630 210 720 280 800 290 830 310M600 290L620 370 700 400M625 370L630 300 720 190M640 560L620 640 660 730 720 740M640 575L760 570 800 600 830 690M750 570L760 640 730 700M870 330L900 560 880 640 990 680 1010 610 980 570 890 590M880 660L980 880M960 680L1110 880M230 410L245 540M105 680C110 760 70 800 80 880M41 800H210L260 850M1150 740C1150 720 1200 720 1195 780L1270 870M440 590L500 640 560 700M320 310C280 350 290 450 330 520M680 430L700 520 640 560"/>
                <path class="road-sm" d="M720 80L740 400M780 80L770 380M830 200L820 400M880 100L840 330M700 300H850M700 340H860M720 260L850 250M760 360L850 420M640 230L760 330M700 180L800 330M880 400L980 410M900 200L920 460M700 470L850 450M600 640H700M590 590V740M530 510V580M950 590H1010V640H950zM900 600H1000M850 560L900 530 1080 560M500 340L620 400M660 480L760 440M940 240L1000 230M600 320L540 390"/>
                <path class="rail" d="M185 70L290 150 440 340 560 385 740 418M484 70L540 350 555 380M41 225L70 215M200 260L340 335 450 352 550 380M700 70L600 220 540 300C530 350 560 390 570 395M41 615C100 570 130 600 160 560S200 490 240 485 320 430 430 402C440 360 460 360 480 365L550 380 630 405 690 495 770 550 840 520 900 455 990 460 1060 510 1509 705M450 360C420 400 430 440 390 560L260 780 220 880M485 75L560 120 660 160 700 165 720 155 850 155 960 210 975 260 990 440M990 460L1050 405 1180 380 1509 210M690 495L685 640 660 770 720 770C750 790 760 840 768 880M845 530C840 600 860 640 870 660S890 800 886 880"/>
                <path d="M560 385L640 405 745 420M900 452L990 462 1100 530 1230 590" stroke="#d2d2d2" stroke-width="3"/>
                <path class="water" d="M1000 90L970 95 940 200 870 330 840 430 750 540 748 590 720 640 690 750 700 790 690 850 650 880M740 600L690 740M985 80L1070 100 1130 75M1110 530L1160 490 1150 510M720 250L740 245"/>
                <path class="bound-b" d="M300 100L295 150 240 200 235 250 220 325 260 330 300 380 290 430 310 450 340 490 370 495 400 440 440 460 490 475 492 600 515 625 512 730 590 790 605 840 640 820 660 790M41 485L65 490 70 540 110 550 150 580 185 605 200 575 250 560 280 600 290 540M280 575L380 625 370 680 330 780 360 820 372 880M300 100L385 98 400 80 485 75M940 235L1020 230 1020 195 1110 205 1100 265 1055 340 1065 400 1155 380 1150 410 1185 440 1160 520 1110 530M1160 560L1160 610 1080 680 1080 755 980 735 910 700 840 715 825 670 740 720 730 710M1285 70L1290 120 1275 140 1310 180 1320 300 1310 360 1255 430 1270 510 1285 600 1310 660 1340 680 1350 800 1415 840 1410 870 1355 865 1360 880M41 150L60 135 90 130 95 80M700 790L720 780 735 740"/>
              </g>
              <text x="325" y="134" font-family="Roboto,sans-serif" font-size="13" font-weight="500" fill="#8b8b8b" stroke="#fafafa" stroke-width="2" paint-order="stroke">Munich</text>
            </svg>
            <span class="pill">Raster</span>
            <span class="link-dot d-flex align-items-center justify-content-center"><svg width="28" height="22" viewBox="0 0 28 22" fill="none" stroke-width="2.800"><ellipse cx="9.500" cy="12.800" rx="5" ry="7.500" transform="rotate(35 9.500 12.800)" stroke="#fff"/><path d="M12.500 5.500l4 4" stroke="#898c93" stroke-width="2"/><ellipse cx="18.500" cy="9.200" rx="5" ry="7.500" transform="rotate(35 18.500 9.200)" stroke="#fff"/><path d="M11.500 12.500l4.500 3.500" stroke="#898c93" stroke-width="1.500"/></svg></span>
            </div>
            <div class="tile-body">
              <div class="d-flex justify-content-between"><h3 class="tile-title">Topographische Karte 1:200.000</h3><button class="more" aria-label="More"><svg width="24" height="48" fill="currentColor"><use href="#dots"/></svg></button></div>
              <div class="tile-meta d-flex align-items-center"><svg width="50" height="50"><use href="#person"/></svg><span>about 24 hours ago</span></div>
            </div>
          </article>
          <article class="tile card">
            <div class="tile-map"><svg class="map" viewBox="0 0 674 280" preserveAspectRatio="xMidYMid slice" role="img" aria-label="Map preview"><use href="#rhein" width="674" height="280"/></svg><span class="pill">Feature</span></div>
            <div class="tile-body">
              <div class="d-flex justify-content-between"><h3 class="tile-title">Erschlossene Bevölkerung [%]</h3><button class="more" aria-label="More"><svg width="24" height="48" fill="currentColor"><use href="#dots"/></svg></button></div>
              <div class="tile-meta d-flex align-items-center"><svg width="50" height="50"><use href="#person"/></svg><span>7 days ago</span></div>
            </div>
          </article>
          <article class="tile card">
            <div class="tile-map"><svg class="map" viewBox="0 0 674 280" preserveAspectRatio="xMidYMid slice" role="img" aria-label="Map preview"><use href="#rhein" width="674" height="280"/></svg><span class="pill">Feature</span></div>
            <div class="tile-body">
              <div class="d-flex justify-content-between"><h3 class="tile-title">heatmap_angebot_bevoelkerung...</h3><button class="more" aria-label="More"><svg width="24" height="48" fill="currentColor"><use href="#dots"/></svg></button></div>
              <div class="tile-meta d-flex align-items-center"><svg width="50" height="50"><use href="#person"/></svg><span>7 days ago</span></div>
            </div>
          </article>
          <button class="tile tile-new d-flex align-items-center justify-content-center" aria-label="New dataset">
            <svg class="map" aria-hidden="true">
              <defs>
                <pattern id="fine" width="9" height="9" patternUnits="userSpaceOnUse"><path d="M.5 0V9M0 .5H9" stroke="#f4f4f4" stroke-dasharray="2 1"/></pattern>
                <pattern id="coarse" x="10" y="14" width="90" height="63" patternUnits="userSpaceOnUse"><path d="M.5 0V63M0 .5H90M0 13.500H90" stroke="#ececec" stroke-dasharray="2 1"/></pattern>
              </defs>
              <rect width="100%" height="100%" fill="url(#fine)"/><rect width="100%" height="100%" fill="url(#coarse)"/>
            </svg>
            <span class="plus d-flex align-items-center justify-content-center"><svg width="32" height="32"><use href="#cross"/></svg></span>
          </button>
        </div>
        <div class="note note-side d-flex align-items-center"><svg width="100" height="60" aria-hidden="true"><use href="#arrow"/></svg>Datasets</div>
      </section>
    </main>
  </div>
</div>

<script>
(function () {
  let seed = 7;
  const rnd = () => (seed = (seed * 16807) % 2147483647) / 2147483647;
  const $ = id => document.getElementById(id);

  // scattered land-use patches for the light base maps
  function patches(n, size) {
    let d = '';
    for (let i = 0; i < n; i++) {
      const cx = rnd() * 674, cy = rnd() * 280, r = size * (.4 + rnd()), k = 5 + Math.floor(rnd() * 4);
      for (let j = 0; j < k; j++) {
        const a = j / k * 6.283, q = r * (.5 + rnd() * .8);
        d += (j ? 'L' : 'M') + (cx + Math.cos(a) * q).toFixed(1) + ' ' + (cy + Math.sin(a) * q).toFixed(1);
      }
      d += 'z';
    }
    return '<path d="' + d + '"/>';
  }
  $('rheinPatches').innerHTML = patches(210, 4);
  $('metroPatches').innerHTML = patches(120, 6);
  $('munichPatches').innerHTML = patches(130, 7);

  // travel-time hexagons: [x, y, reach, offset added to the travel time]
  const sites = [[226,76,34,.1],[214,92,28,.45],[250,88,26,.5],[205,52,16,.6],[236,62,20,.45],
    [450,130,36,.05],[440,118,24,.4],[474,132,26,.55],[440,92,20,.6],[430,145,22,.6],[462,95,18,.6],[455,160,22,.5],[430,170,28,.65],
    [404,180,26,.55],[385,175,26,.62],[370,190,26,.6],[350,178,34,.5],[330,168,22,.65],[347,201,26,.42],[318,200,22,.25],[330,220,32,.42],[345,228,24,.5],[305,236,20,.6],[316,178,18,.62],
    [250,274,30,.3],[228,262,22,.55],[268,262,22,.55],[240,240,16,.6],
    [450,228,28,.05],[452,252,30,.05],[430,240,26,.5],[476,258,24,.55],[440,204,22,.5],[480,225,20,.5],[425,262,18,.6],[476,275,20,.6],[490,205,8,.6],
    [470,6,12,.5],[470,18,9,.7],[378,272,14,.75]];
  const land = [[242,0],[222,14],[216,29],[191,35],[173,22],[162,22],[150,34],[134,39],[109,14],[94,29],[100,54],[124,72],[111,92],[107,118],[97,149],[70,152],[69,158],[28,168],[23,158],[0,163],[0,280],[674,280],[674,0]];
  function inside(x, y) {
    let c = false;
    for (let i = 0, j = land.length - 1; i < land.length; j = i++) {
      const a = land[i], b = land[j];
      if ((a[1] > y) !== (b[1] > y) && x < (b[0] - a[0]) * (y - a[1]) / (b[1] - a[1]) + a[0]) c = !c;
    }
    return c;
  }
  const groups = {}, R = 4.1;
  let row = 0;
  for (let y = -2; y < 286; y += 6.2, row++) for (let x = (row % 2) * 3.6 - 2; x < 680; x += 7.2) {
    let col = '#b92849';
    if (!inside(x, y)) {
      if (x < 22 + rnd() * 6 && y > 80 && y < 166) col = '#74405a'; else continue;
    } else {
      let best = 9;
      const jitter = (rnd() - .5) * .26;
      for (const s of sites) {
        const t = Math.hypot(x - s[0], y - s[1]) / s[2] * (1.1 - s[3] * .6) + s[3] + jitter;
        if (t < best) best = t;
      }
      if (best < .42) col = '#76405a'; else if (best < .66) col = '#9c646a'; else if (best < .9) col = '#c46253'; else if (best < 1.12) col = '#c94b38';
    }
    let d = '';
    for (let k = 0; k < 6; k++) { const a = (k * 60 + 30) * Math.PI / 180; d += (k ? 'L' : 'M') + (x + R * Math.cos(a)).toFixed(1) + ' ' + (y + R * Math.sin(a)).toFixed(1); }
    groups[col] = (groups[col] || '') + d + 'z';
  }
  const edge = { '#b92849': '#c24263', '#76405a': '#7f4a63', '#74405a': '#84506a', '#9c646a': '#a46c71', '#c46253': '#ca6a5c', '#c94b38': '#cc5646' };
  $('hexes').innerHTML = Object.keys(groups).map(c => '<path d="' + groups[c] + '" fill="' + c + '" stroke="' + edge[c] + '"/>').join('');

  // building raster
  let dots = '';
  [[290,4,60,14],[315,20,25,24],[318,45,20,24],[176,66,24,20],[205,80,60,30],[355,85,10,26],[358,112,36,40],[478,78,18,42],[430,120,60,30],[495,118,52,18],[515,136,18,22],[192,40,20,14],[82,165,24,14],[70,177,24,6],[330,155,70,36],[305,170,40,60],[372,190,40,22],[215,218,24,30],[220,255,46,24],[432,235,60,44],[390,226,4,24],[640,92,20,20]].forEach(b => {
    for (let y = b[1]; y < b[1] + b[3]; y += 5.6) for (let x = b[0]; x < b[0] + b[2]; x += 6.6) if (rnd() > .14) dots += '<circle cx="' + x + '" cy="' + y + '" r=".95"/>';
  });
  $('builds').innerHTML = dots;

  // charging stations
  $('pumps').innerHTML = [[225,72],[448,128],[404,180],[347,201],[312,211],[250,271],[448,258],[454,272],[2,128],[447,232,1]].map(p =>
    '<g transform="translate(' + (p[0] - 6) + ' ' + (p[1] - 6) + ')"><rect width="12" height="12" rx="1.5" fill="' + (p[2] ? '#e08a1c' : '#2f62d0') + '"/><path d="M2 2.500h5v7.500H2zM8 4l2 1.500v4H8.500V6" fill="#fff"/><rect x="3.200" y="3.500" width="2.600" height="1.800" fill="' + (p[2] ? '#e08a1c' : '#2f62d0') + '"/></g>').join('');

  // metro stations and the access heat around them
  const st = '814,148 856,150 875,155 892,196 898,239 1018,158 1008,205 1012,264 995,308 983,333 967,363 948,400 937,425 931,454 922,492 901,306 831,296 856,334 884,353 901,374 915,400 890,427 886,459 878,481 870,507 727,324 754,318 787,317 785,345 783,383 785,420 795,470 828,489 1028,471 1018,497 1015,525 992,547 970,566 941,544 911,542 877,544 846,566 885,577 907,603 863,599 840,622 836,652 837,690 830,748 804,766 771,767 744,772 702,783 683,803 654,818 722,567 766,572 804,577 678,658 645,674 636,708 713,669 752,661 778,666 804,666 986,606 1064,614 1097,619 1143,619 1164,592 1216,577 1250,577 1024,647 999,658 1058,658 911,653 920,676 895,694 907,709 941,690 961,699 924,733 920,770 1097,709 1098,750 1091,798'
    .split(' ').map(p => { const q = p.split(',').map(Number); return [(q[0] - 37) / 2.178, (q[1] - 57) / 2.904]; });
  const pal = ['#c9485a', '#dd6552', '#e8874a', '#e3b246', '#86c978', '#3fbf88'], heat = pal.map(() => '');
  st.forEach(s => {
    const core = Math.hypot(s[0] - 400, (s[1] - 150) * .8) < 55;
    const quiet = s[0] > 540 || (s[0] > 430 && s[1] < 75);
    const bias = Math.floor(rnd() * 3);
    for (let i = 0; i < (quiet ? 16 : 54); i++) {
      const a = rnd() * 6.283, r = 19 * Math.sqrt(rnd());
      let k = Math.floor(rnd() * (core ? 3.2 : 4)) + (core ? 0 : Math.floor(rnd() * (bias + 1)));
      if (rnd() < .12) k = 5;
      heat[Math.min(5, k)] += 'M' + (s[0] + Math.cos(a) * r).toFixed(1) + ' ' + (s[1] + Math.sin(a) * r).toFixed(1) + 'h.1';
    }
  });
  $('heat').innerHTML = [5, 2, 0, 3, 1, 4].map(i => '<path d="' + heat[i] + '" stroke="' + pal[i] + '"/>').join('');
  $('stations').innerHTML = st.map(s => '<circle cx="' + s[0].toFixed(1) + '" cy="' + s[1].toFixed(1) + '" r="3.2"/>').join('');
})();
</script>
</body>
</html>
